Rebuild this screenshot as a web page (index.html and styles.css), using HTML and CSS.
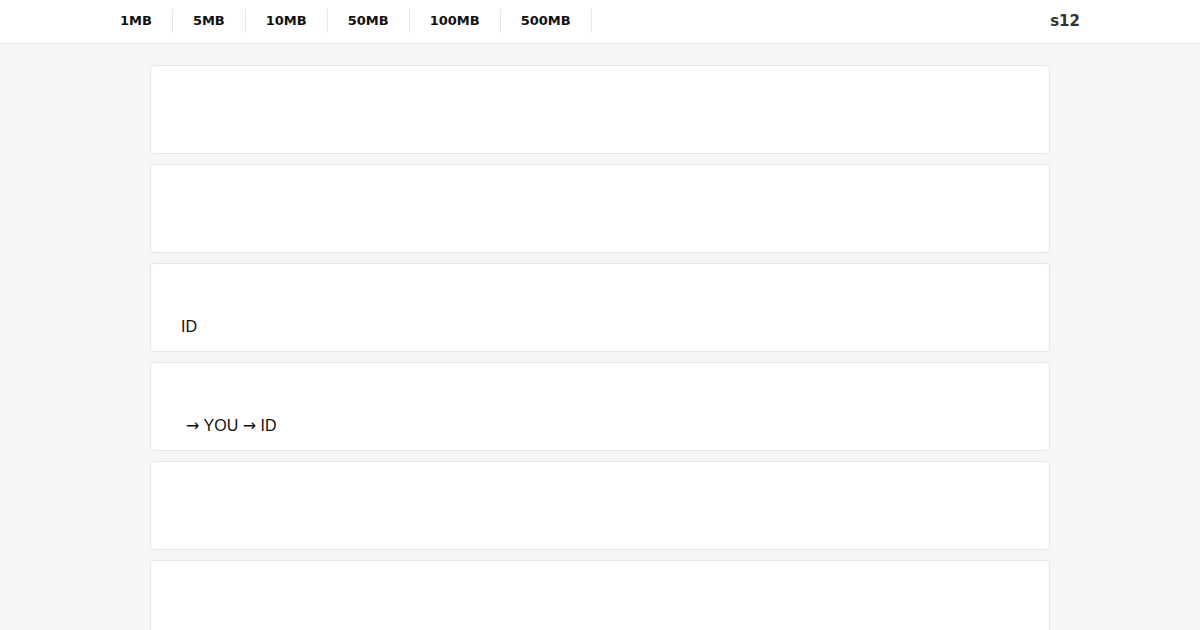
FILE: index.html
```html
<!DOCTYPE html>
<html lang="en">
<head>
    <meta charset="UTF-8">
    <meta name="viewport" content="width=device-width, initial-scale=1.0">
    <title>s12</title>
    <link rel="stylesheet" href="styles.css">
</head>
<body>
    <header class="topbar">
        <div class="topbar-inner">
            <nav class="sizes">
                <a href="#" class="size-link">1MB</a>
                <a href="#" class="size-link">5MB</a>
                <a href="#" class="size-link">10MB</a>
                <a href="#" class="size-link">50MB</a>
                <a href="#" class="size-link">100MB</a>
                <a href="#" class="size-link">500MB</a>
            </nav>
            <div class="brand">s12</div>
        </div>
    </header>

    <main class="cards">
        <div class="card">
            <div class="card-title"></div>
            <div class="card-text"></div>
        </div>
        <div class="card">
            <div class="card-title"></div>
            <div class="card-text"></div>
        </div>
        <div class="card">
            <div class="card-title"></div>
            <div class="card-text">ID</div>
        </div>
        <div class="card">
            <div class="card-title"></div>
            <div class="card-text indent"><span class="arrow">→</span> YOU <span class="arrow">→</span> ID</div>
        </div>
        <div class="card">
            <div class="card-title"></div>
            <div class="card-text"></div>
        </div>
        <div class="card">
            <div class="card-title"></div>
            <div class="card-text"></div>
        </div>
    </main>
</body>
</html>
```

FILE: styles.css
```css
body {
    margin: 0;
    background-color: #f6f6f6;
    font-family: "Liberation Sans", Arial, sans-serif;
    color: #111;
}
.topbar {
    background: #fff;
    border-bottom: 1px solid #e5e5e5;
}
.topbar-inner {
    width: 1000px;
    margin: 0 auto;
    height: 43px;
    display: flex;
    justify-content: space-between;
    align-items: center;
}
.sizes {
    display: flex;
    margin-bottom: 1px;
}
.size-link {
    display: block;
    padding: 0 20px;
    height: 24px;
    line-height: 24px;
    border-right: 1px solid #e8e8e8;
    font-family: "DejaVu Sans", sans-serif;
    font-weight: bold;
    font-size: 13px;
    color: #111;
    text-decoration: none;
}
.brand {
    padding-right: 20px;
    padding-bottom: 2px;
    font-family: "DejaVu Sans", sans-serif;
    font-weight: bold;
    font-size: 15px;
    color: #333;
}
.cards {
    width: 900px;
    margin: 0 auto;
    padding-top: 21px;
    display: flex;
    flex-direction: column;
    gap: 10px;
}
.card {
    background: #fff;
    border: 1px solid #e6e6e6;
    border-radius: 4px;
    padding: 20px 30px 15px;
}
.card-title {
    height: 24px;
    margin-bottom: 10px;
}
.card-text {
    height: 18px;
    line-height: 18px;
    font-size: 16px;
}
.indent {
    padding-left: 5px;
}
.arrow {
    font-family: "DejaVu Sans", sans-serif;
}
```
